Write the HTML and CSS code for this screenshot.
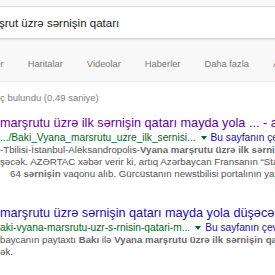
FILE: index.html
```html
<!DOCTYPE html>
<html lang="az">
<head>
    <meta charset="UTF-8">
    <meta name="viewport" content="width=device-width, initial-scale=1.0">
    <title>Bakı-Vyana marşrut üzrə sərnişin qatarı - Google'da Ara</title>
    <link rel="stylesheet" href="styles.css">
</head>
<body>
    <div id="top">
        <div class="search-box">
            <span class="query">şrut üzrə sərnişin qatarı</span>
        </div>
        <div class="tabs">
            <span>Görseller</span>
            <span>Haritalar</span>
            <span>Videolar</span>
            <span>Haberler</span>
            <span>Daha fazla</span>
            <span>Ayarlar</span>
        </div>
    </div>

    <div id="results">
        <p class="stats">ç bulundu (0,49 saniye)</p>

        <div class="result">
            <a class="title visited" href="#">marşrutu üzrə ilk sərnişin qatarı mayda yola ... - azertag.az</a>
            <div class="url">
                <cite>.../Baki_Vyana_marsrutu_uzre_ilk_sernisi...</cite>
                <span class="arrow"></span>
                <a class="translate" href="#">Bu sayfanın çevirisini yap</a>
            </div>
            <div class="snippet">
                <span class="line">-Tbilisi-İstanbul-Aleksandropolis-<b>Vyana marşrutu üzrə ilk sərnişin qatarı</b></span>
                <span class="line">şəcək. AZƏRTAC xəbər verir ki, artıq Azərbaycan Fransanın “Stadler”</span>
                <span class="line indent">64 <b>sərnişin</b> vaqonu alıb. Gürcüstanın newstbilisi portalının yaydığı</span>
            </div>
        </div>

        <div class="result">
            <a class="title" href="#">marşrutu üzrə sərnişin qatarı mayda yola düşəcək</a>
            <div class="url">
                <cite>aki-vyana-marsrutu-uzr-s-rnisin-qatari-m...</cite>
                <span class="arrow"></span>
                <a class="translate" href="#">Bu sayfanın çevirisini yap</a>
            </div>
            <div class="snippet">
                <span class="line">baycanın paytaxtı <b>Bakı</b> ilə <b>Vyana marşrutu üzrə ilk sərnişin qatarı</b></span>
                <span class="line">ək.</span>
            </div>
        </div>
    </div>
</body>
</html>
```

FILE: styles.css
```css
/* Resetting some default styles */
* {
    margin: 0;
    padding: 0;
    box-sizing: border-box;
}

html,
body {
    width: 275px;
    height: 275px;
    overflow: hidden;
}

body {
    font-family: 'Liberation Sans', Arial, sans-serif;
    background: #fff;
}

a {
    text-decoration: none;
}

/* Header with search box and tabs */
#top {
    height: 82px;
    padding-top: 6px;
    background: #f8f8f8;
    border-bottom: 1px solid #ebebeb;
}

.search-box {
    display: flex;
    align-items: center;
    height: 33px;
    background: #fff;
    border-top: 1px solid #d9d9d9;
    border-bottom: 1px solid #d9d9d9;
    box-shadow: 0 1px 1px rgba(0, 0, 0, 0.08);
    font-size: 11.5px;
    color: #222;
    white-space: nowrap;
}

.query {
    margin-left: -1px;
}

.tabs {
    display: flex;
    gap: 24px;
    margin-top: 17px;
    margin-left: -34px;
    font-size: 9.3px;
    line-height: 16px;
    color: #777;
    white-space: nowrap;
}

/* Results */
#results {
    padding-top: 10px;
}

.stats {
    font-size: 9.5px;
    line-height: 12px;
    color: #808080;
    white-space: nowrap;
}

.result {
    margin-top: 12px;
    white-space: nowrap;
}

.result + .result {
    margin-top: 26px;
}

.title {
    display: block;
    font-size: 12.7px;
    line-height: 15px;
    color: #1a0dab;
}

.title.visited {
    color: #660099;
}

.url {
    display: flex;
    align-items: center;
    height: 13px;
    font-size: 10.2px;
}

.url cite {
    font-style: normal;
    color: #006621;
}

.arrow {
    margin: 1px 4px 0 5px;
    border-left: 3px solid transparent;
    border-right: 3px solid transparent;
    border-top: 4px solid #006621;
}

.translate {
    color: #1a0dab;
}

.snippet {
    font-size: 9.7px;
    line-height: 12px;
    color: #545454;
}

.snippet .line {
    display: block;
}

.snippet b {
    color: #6a6a6a;
}

.indent {
    padding-left: 10px;
}
```
